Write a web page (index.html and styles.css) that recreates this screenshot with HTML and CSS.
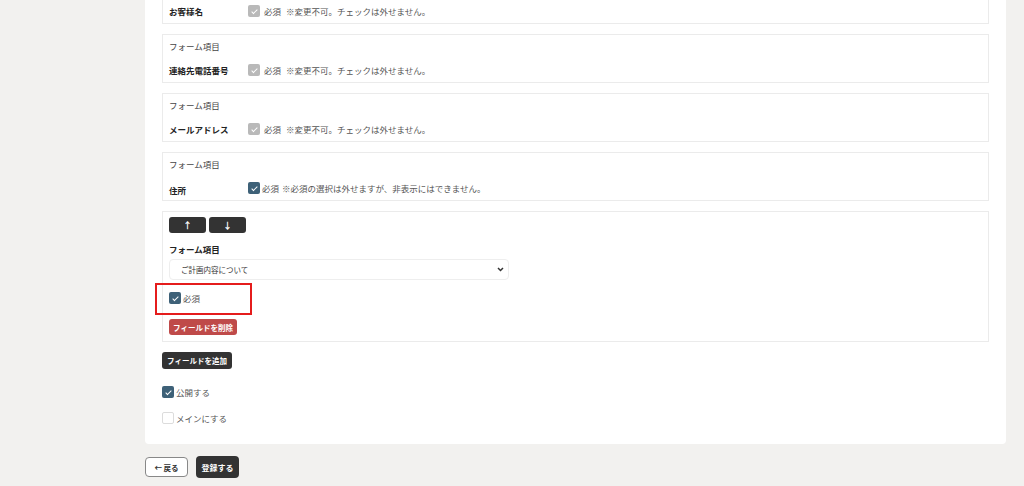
FILE: index.html
```html
<!DOCTYPE html>
<html lang="ja">
<head>
    <meta charset="UTF-8">
    <title>フォーム設定</title>
    <link rel="stylesheet" href="styles.css">
</head>
<body>
    <div class="panel">
        <div class="field-box first">
            <div class="field-row">
                <span class="field-name">お客様名</span>
                <span class="check disabled"></span>
                <span class="req">必須</span><span class="note">※変更不可。チェックは外せません。</span>
            </div>
        </div>
        <div class="field-box">
            <div class="field-title">フォーム項目</div>
            <div class="field-row">
                <span class="field-name">連絡先電話番号</span>
                <span class="check disabled"></span>
                <span class="req">必須</span><span class="note">※変更不可。チェックは外せません。</span>
            </div>
        </div>
        <div class="field-box">
            <div class="field-title">フォーム項目</div>
            <div class="field-row">
                <span class="field-name">メールアドレス</span>
                <span class="check disabled"></span>
                <span class="req">必須</span><span class="note">※変更不可。チェックは外せません。</span>
            </div>
        </div>
        <div class="field-box">
            <div class="field-title">フォーム項目</div>
            <div class="field-row">
                <span class="field-name lower">住所</span>
                <span class="check on"></span>
                <span class="req tight">必須</span><span class="note tight">※必須の選択は外せますが、非表示にはできません。</span>
            </div>
        </div>
        <div class="field-box custom">
            <div class="move-buttons">
                <button class="btn-dark small">&#8593;</button>
                <button class="btn-dark small">&#8595;</button>
            </div>
            <div class="custom-title">フォーム項目</div>
            <div class="select-wrap">
                <span>ご計画内容について</span>
                <svg width="7" height="5" viewBox="0 0 7 5"><path d="M1 1l2.5 2.5L6 1" fill="none" stroke="#333" stroke-width="1.5"/></svg>
            </div>
            <label class="check-line required">
                <span class="check on"></span>必須
            </label>
            <div class="highlight"></div>
            <button class="btn-red">フィールドを削除</button>
        </div>

        <button class="btn-dark add">フィールドを追加</button>

        <label class="check-line option public">
            <span class="check on"></span>公開する
        </label>
        <label class="check-line option main">
            <span class="check off"></span>メインにする
        </label>
    </div>

    <div class="actions">
        <button class="btn-back">&#8592; 戻る</button>
        <button class="btn-dark submit">登録する</button>
    </div>
</body>
</html>
```

FILE: styles.css
```css
body {
    margin: 0;
    background: #f2f1ef;
    font-family: "Noto Sans CJK JP", "Noto Sans", sans-serif;
    font-size: 8.5px;
    color: #333;
    height: 486px;
    overflow: hidden;
}

.panel {
    margin-left: 145px;
    width: 827px;
    padding: 0 17px 20px;
    background: #fff;
    border-radius: 0 0 4px 4px;
}

.field-box {
    border: 1px solid #ebebeb;
    padding: 5px 6px 4px;
    margin-bottom: 10px;
    position: relative;
}

.field-box.first {
    border-top: none;
    padding-top: 3px;
}

.field-title {
    line-height: 12px;
    color: #444;
}

.field-row {
    display: flex;
    align-items: center;
    height: 16px;
    margin-top: 10px;
}

.first .field-row {
    margin-top: 0;
}

.field-name {
    width: 79px;
    font-weight: bold;
    color: #222;
}

.field-name.lower {
    position: relative;
    top: 2px;
}

.req {
    margin-left: 4px;
    color: #555;
}

.note {
    margin-left: 5px;
    color: #555;
}

.req.tight {
    margin-left: 2px;
}

.note.tight {
    margin-left: 3px;
}

.check {
    display: inline-block;
    width: 12px;
    height: 12px;
    border-radius: 2px;
    box-sizing: border-box;
    position: relative;
    flex-shrink: 0;
}

.check.disabled {
    background: #b9b9b9;
}

.check.on {
    background: #3e6178;
}

.check.off {
    border: 1px solid #dcdcdc;
    background: #fff;
}

.check.disabled::after,
.check.on::after {
    content: "";
    position: absolute;
    left: 4.5px;
    top: 2.5px;
    width: 2px;
    height: 5px;
    border: solid #fff;
    border-width: 0 1.3px 1.3px 0;
    transform: rotate(45deg);
}

.custom {
    padding: 5px 6px 6px;
}

.move-buttons {
    display: flex;
    gap: 3px;
}

.btn-dark {
    background: #333;
    color: #fff;
    border: none;
    border-radius: 3px;
    font-family: inherit;
    font-weight: bold;
    font-size: 8px;
    cursor: pointer;
}

.btn-dark.small {
    width: 37px;
    height: 16px;
    padding: 0;
    font-size: 9px;
}

.custom-title {
    font-weight: bold;
    margin-top: 10px;
    line-height: 12px;
    color: #222;
}

.select-wrap {
    display: flex;
    justify-content: space-between;
    align-items: center;
    width: 340px;
    height: 21px;
    box-sizing: border-box;
    margin-top: 4px;
    padding: 0 4px 0 11px;
    border: 1px solid #eee;
    border-radius: 4px;
    font-size: 7.5px;
    color: #333;
}

.check-line {
    display: flex;
    align-items: center;
    gap: 2px;
    color: #555;
    height: 12px;
}

.check-line.required {
    margin-top: 12px;
}

.highlight {
    position: absolute;
    left: -8px;
    top: 71px;
    width: 93px;
    height: 28px;
    border: 2px solid #e51c1c;
}

.btn-red {
    display: block;
    margin-top: 15px;
    background: #bf4a49;
    color: #fff;
    border: none;
    border-radius: 3px;
    height: 16px;
    width: 68px;
    padding: 0;
    font-family: inherit;
    font-weight: bold;
    font-size: 7.5px;
}

.btn-dark.add {
    display: block;
    width: 70px;
    height: 17px;
    padding: 0;
    font-size: 7.5px;
}

.check-line.public {
    margin-top: 17px;
}

.check-line.main {
    margin-top: 14px;
}

.actions {
    display: flex;
    gap: 8px;
    margin: 13px 0 0 145px;
}

.btn-back {
    width: 43px;
    height: 20px;
    padding: 0;
    background: #fff;
    border: 1px solid #888;
    border-radius: 4px;
    font-family: inherit;
    font-weight: bold;
    font-size: 7.5px;
    color: #333;
}

.btn-dark.submit {
    width: 43px;
    height: 22px;
    padding: 0;
    margin-top: -1px;
    border-radius: 4px;
}
```
